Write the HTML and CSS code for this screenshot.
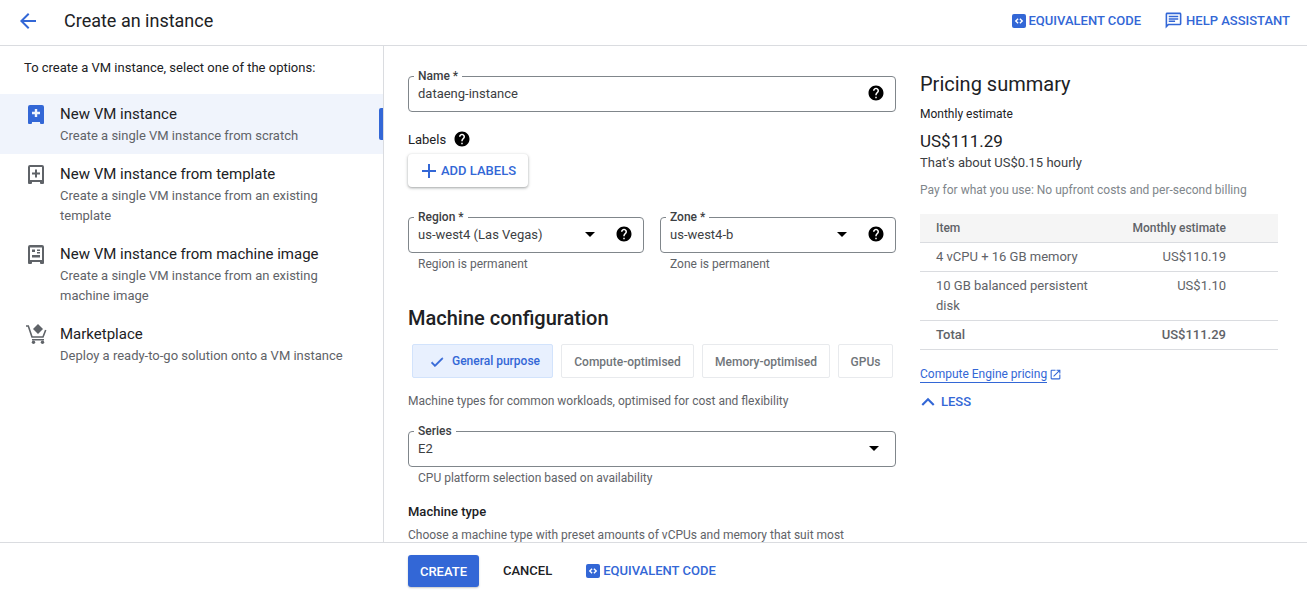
FILE: index.html
```html
<!DOCTYPE html>
<html lang="en">
<head>
<meta charset="utf-8">
<title>Create an instance</title>
<link rel="stylesheet" href="styles.css">
</head>
<body>
<svg class="defs" width="0" height="0" aria-hidden="true">
  <symbol id="help" viewBox="0 0 24 24"><path d="M12 2C6.48 2 2 6.48 2 12s4.48 10 10 10 10-4.48 10-10S17.52 2 12 2zm1 17h-2v-2h2v2zm2.07-7.75l-.9.92C13.45 12.9 13 13.5 13 15h-2v-.5c0-1.1.45-2.1 1.17-2.83l1.24-1.26c.37-.36.59-.86.59-1.41 0-1.1-.9-2-2-2s-2 .9-2 2H8c0-2.21 1.79-4 4-4s4 1.79 4 4c0 .88-.36 1.68-.93 2.25z"/></symbol>
  <symbol id="code" viewBox="0 0 14 14"><rect width="14" height="14" rx="2" fill="#3367d6"/><path d="M5.6 4.2L2.8 7l2.8 2.800 1-1L4.800 7l1.800-1.800zM8.400 4.200l-1 1L9.200 7 7.400 8.800l1 1L11.200 7z" fill="#fff"/></symbol>
</svg>

<header class="topbar">
  <svg class="back" viewBox="0 0 24 24"><path d="M20 11H7.83l5.59-5.59L12 4l-8 8 8 8 1.41-1.41L7.83 13H20v-2z"/></svg>
  <h1 class="title">Create an instance</h1>
  <div class="top-actions">
    <a class="action"><svg class="code-icon"><use href="#code"/></svg>EQUIVALENT CODE</a>
    <a class="action action-help"><svg class="chat-icon" viewBox="0 0 24 24"><path d="M20 2H4c-1.1 0-2 .9-2 2v18l4-4h14c1.1 0 2-.9 2-2V4c0-1.1-.9-2-2-2zm0 14H5.17L4 17.17V4h16v12zM6 12h8v2H6zm0-3h12v2H6zm0-3h12v2H6z"/></svg>HELP ASSISTANT</a>
  </div>
</header>

<div class="main">
  <nav class="side">
    <p class="side-intro">To create a VM instance, select one of the options:</p>
    <div class="option option-active">
      <svg class="option-icon" viewBox="0 0 16 19"><path fill-rule="evenodd" d="M2 0h12a2 2 0 0 1 2 2v16a1 1 0 0 1-1 1h-2a1 1 0 0 1-1-1v-1H4v1a1 1 0 0 1-1 1H1a1 1 0 0 1-1-1V2a2 2 0 0 1 2-2zM6.800 4v2.800H4v2.400h2.800V12h2.400V9.200H12V6.800H9.200V4z"/></svg>
      <div class="option-title">New VM instance</div>
      <div class="option-desc">Create a single VM instance from scratch</div>
    </div>
    <div class="option">
      <svg class="option-icon" viewBox="0 0 16 19"><path fill-rule="evenodd" d="M2 0h12a2 2 0 0 1 2 2v16a1 1 0 0 1-1 1h-2a1 1 0 0 1-1-1v-1H4v1a1 1 0 0 1-1 1H1a1 1 0 0 1-1-1V2a2 2 0 0 1 2-2zM2 2v13h12V2zM7 4.500V7.500H4v2h3v3h2v-3h3v-2H9v-3z"/></svg>
      <div class="option-title">New VM instance from template</div>
      <div class="option-desc">Create a single VM instance from an existing template</div>
    </div>
    <div class="option">
      <svg class="option-icon" viewBox="0 0 16 19"><path fill-rule="evenodd" d="M2 0h12a2 2 0 0 1 2 2v16a1 1 0 0 1-1 1h-2a1 1 0 0 1-1-1v-1H4v1a1 1 0 0 1-1 1H1a1 1 0 0 1-1-1V2a2 2 0 0 1 2-2zM2 2.500V15h12V2.500zM4 4.500h3V7H4zM9 4.500h3V6H9zM9 7h3v1.500H9zM4 10h8v2.500H4z"/></svg>
      <div class="option-title">New VM instance from machine image</div>
      <div class="option-desc">Create a single VM instance from an existing machine image</div>
    </div>
    <div class="option">
      <svg class="option-icon option-cart" viewBox="0 0 22 20"><path d="M13 0l5 5-5 5-5-5z"/><path d="M1 2h2.300l3.700 11h11l2.700-7" fill="none" stroke-width="1.600" stroke="#5f6368"/><path d="M7 15h12v1.500H7z"/><circle cx="8.500" cy="18.300" r="1.700"/><circle cx="17.500" cy="18.300" r="1.700"/></svg>
      <div class="option-title">Marketplace</div>
      <div class="option-desc">Deploy a ready-to-go solution onto a VM instance</div>
    </div>
  </nav>

  <div class="content">
    <form class="form">
      <div class="field">
        <span class="field-label">Name *</span>
        <span class="field-value">dataeng-instance</span>
        <svg class="help-icon"><use href="#help"/></svg>
      </div>

      <div class="labels-row"><span>Labels</span><svg class="help-icon"><use href="#help"/></svg></div>
      <button type="button" class="add-labels"><svg class="plus" viewBox="0 0 24 24"><path d="M19 13h-6v6h-2v-6H5v-2h6V5h2v6h6v2z"/></svg>ADD LABELS</button>

      <div class="two-col">
        <div>
          <div class="field">
            <span class="field-label">Region *</span>
            <span class="field-value">us-west4 (Las Vegas)</span>
            <i class="caret caret-gap"></i>
            <svg class="help-icon"><use href="#help"/></svg>
          </div>
          <div class="hint">Region is permanent</div>
        </div>
        <div>
          <div class="field">
            <span class="field-label">Zone *</span>
            <span class="field-value">us-west4-b</span>
            <i class="caret caret-gap"></i>
            <svg class="help-icon"><use href="#help"/></svg>
          </div>
          <div class="hint">Zone is permanent</div>
        </div>
      </div>

      <h2 class="section-title">Machine configuration</h2>
      <div class="tabs">
        <div class="tab tab-active"><svg class="check" viewBox="0 0 24 24"><path d="M9 16.170L4.830 12l-1.420 1.410L9 19 21 7l-1.410-1.410z"/></svg>General purpose</div>
        <div class="tab tab-compute">Compute-optimised</div>
        <div class="tab tab-memory">Memory-optimised</div>
        <div class="tab tab-gpu">GPUs</div>
      </div>
      <p class="tab-desc">Machine types for common workloads, optimised for cost and flexibility</p>

      <div class="field field-series">
        <span class="field-label">Series</span>
        <span class="field-value">E2</span>
        <i class="caret"></i>
      </div>
      <div class="hint">CPU platform selection based on availability</div>

      <h3 class="sub-title">Machine type</h3>
      <p class="tab-desc type-desc">Choose a machine type with preset amounts of vCPUs and memory that suit most</p>
    </form>

    <aside class="pricing">
      <h2 class="pricing-title">Pricing summary</h2>
      <div class="pricing-label">Monthly estimate</div>
      <div class="pricing-amount">US$111.29</div>
      <div class="pricing-hourly">That's about US$0.15 hourly</div>
      <div class="pricing-note">Pay for what you use: No upfront costs and per-second billing</div>
      <table class="price-table">
        <thead><tr><th>Item</th><th class="num">Monthly estimate</th></tr></thead>
        <tbody>
          <tr><td>4 vCPU + 16 GB memory</td><td class="num">US$110.19</td></tr>
          <tr><td>10 GB balanced persistent disk</td><td class="num">US$1.10</td></tr>
          <tr class="total"><td>Total</td><td class="num">US$111.29</td></tr>
        </tbody>
      </table>
      <div class="pricing-link-row"><a class="pricing-link">Compute Engine pricing</a><svg class="open-icon" viewBox="0 0 24 24"><path d="M19 19H5V5h7V3H5a2 2 0 0 0-2 2v14a2 2 0 0 0 2 2h14c1.100 0 2-.9 2-2v-7h-2v7zM14 3v2h3.590l-9.830 9.830 1.410 1.410L19 6.410V10h2V3h-7z"/></svg></div>
      <div class="less"><svg class="chev" viewBox="0 0 24 24"><path d="M12 8l-6 6 1.410 1.410L12 10.830l4.590 4.580L18 14z"/></svg>LESS</div>
    </aside>
  </div>
</div>

<footer class="footer">
  <button type="button" class="create">CREATE</button>
  <span class="cancel">CANCEL</span>
  <a class="action"><svg class="code-icon"><use href="#code"/></svg>EQUIVALENT CODE</a>
</footer>
</body>
</html>
```

FILE: styles.css
```css
* { box-sizing: border-box; }
html, body { height: 100%; }
body {
  margin: 0;
  height: 100vh;
  overflow: hidden;
  display: flex;
  flex-direction: column;
  font-family: Roboto, "Liberation Sans", sans-serif;
  font-size: 13px;
  color: #202124;
  background: #fff;
}
.defs { position: absolute; }
h1, h2, h3, p { margin: 0; }

/* Top bar */
.topbar {
  flex: 0 0 46px;
  display: flex;
  align-items: center;
  padding: 0 17px 4px 16px;
  border-bottom: 1px solid #dadce0;
}
.back { width: 24px; height: 24px; fill: #3367d6; margin-right: 24px; flex: none; }
.title { font-size: 18px; font-weight: 400; color: #202124; }
.top-actions { margin-left: auto; display: flex; align-items: center; gap: 23px; }
.action {
  display: inline-flex;
  align-items: center;
  color: #3367d6;
  font-size: 13px;
  font-weight: 500;
  line-height: 16px;
  white-space: nowrap;
}
.code-icon { width: 14px; height: 14px; margin-right: 3px; flex: none; }
.chat-icon { width: 19px; height: 19px; fill: #3367d6; margin-right: 3px; flex: none; }

/* Main */
.main { flex: 1; min-height: 0; display: flex; }
.side { flex: 0 0 384px; border-right: 1px solid #dadce0; }
.side-intro { padding: 14px 0 0 24px; height: 48px; line-height: 16px; font-size: 13px; color: #202124; }
.option { position: relative; padding: 10px 40px 8px 60px; }
.option-active { background: #f0f4fc; }
.option-active::after {
  content: "";
  position: absolute;
  right: 0;
  top: 14px;
  width: 4px;
  height: 32px;
  border-radius: 2px 0 0 2px;
  background: #3367d6;
}
.option-icon { position: absolute; left: 28px; top: 11px; width: 16px; height: 19px; fill: #5f6368; }
.option-active .option-icon { fill: #3367d6; }
.option-cart { left: 25px; top: 10px; width: 22px; height: 20px; }
.option-title { font-size: 15px; line-height: 20px; margin-bottom: 2px; color: #202124; }
.option-desc { font-size: 13px; line-height: 20px; color: #5f6368; }

.content { flex: 1; min-width: 0; overflow: hidden; display: flex; padding-left: 24px; }
.form { flex: 0 0 488px; padding-top: 30px; }

/* Fields */
.field {
  position: relative;
  display: flex;
  align-items: center;
  height: 36px;
  padding: 0 10px 2px 9px;
  border: 1px solid #80868b;
  border-radius: 4px;
}
.field-label {
  position: absolute;
  left: 5px;
  top: -8px;
  padding: 0 4px;
  background: #fff;
  font-size: 12px;
  font-weight: 500;
  line-height: 14px;
  color: #3c4043;
}
.field-value { flex: 1; font-size: 13px; color: #3c4043; }
.help-icon { width: 18px; height: 18px; fill: #000; flex: none; }
.caret {
  width: 0;
  height: 0;
  border-left: 5px solid transparent;
  border-right: 5px solid transparent;
  border-top: 5px solid #000;
  flex: none;
  margin-right: 6px;
}
.caret-gap { margin-right: 20px; }
.labels-row {
  display: flex;
  align-items: center;
  gap: 7px;
  margin-top: 17px;
  height: 20px;
  font-size: 13px;
  color: #202124;
}
.add-labels {
  display: flex;
  align-items: center;
  height: 33px;
  width: 120px;
  margin-top: 5px;
  padding: 0 0 0 9px;
  border: 0;
  border-radius: 4px;
  background: #fff;
  box-shadow: 0 1px 2px rgba(60,64,67,.3), 0 1px 3px 1px rgba(60,64,67,.15);
  color: #3367d6;
  font-family: inherit;
  font-size: 13px;
  font-weight: 500;
}
.plus { width: 24px; height: 24px; fill: #3367d6; }
.two-col { display: grid; grid-template-columns: 236px 236px; gap: 16px; margin-top: 30px; }
.hint { padding: 3px 0 0 10px; font-size: 12px; line-height: 16px; color: #5f6368; }
.section-title { margin-top: 33px; font-size: 20px; line-height: 26px; font-weight: 500; color: #202124; }

/* Tabs */
.tabs { display: flex; gap: 8px; margin: 13px 0 0 4px; }
.tab {
  display: flex;
  align-items: center;
  justify-content: center;
  height: 34px;
  padding-top: 1px;
  border: 1px solid #e8eaed;
  border-radius: 2px;
  font-size: 12px;
  font-weight: 500;
  color: #70757a;
}
.tab-active { width: 141px; background: #e8f0fe; border-color: #d2e3fc; color: #3367d6; padding: 0 0 1px 4px; }
.tab-compute { width: 133px; }
.tab-memory { width: 128px; }
.tab-gpu { width: 55px; }
.check { width: 16px; height: 16px; fill: #3367d6; stroke: #3367d6; stroke-width: 1; margin-right: 7px; position: relative; top: 1px; }
.tab-desc { margin-top: 15px; font-size: 12px; line-height: 16px; color: #5f6368; }
.field-series { margin-top: 22px; }
.sub-title { margin-top: 18px; font-size: 13px; line-height: 16px; font-weight: 500; color: #202124; }
.type-desc { margin-top: 7px; }

/* Pricing */
.pricing { flex: 0 0 358px; margin-left: 24px; padding-top: 25px; }
.pricing-title { font-size: 20px; line-height: 26px; font-weight: 400; color: #202124; }
.pricing-label { margin-top: 9px; font-size: 12px; line-height: 16px; color: #202124; }
.pricing-amount { margin-top: 8px; font-size: 17px; line-height: 22px; color: #202124; }
.pricing-hourly { margin-top: 2px; font-size: 13px; line-height: 18px; color: #3c4043; }
.pricing-note { margin-top: 10px; font-size: 12px; line-height: 16px; color: #80868b; }
.price-table { width: 358px; margin-top: 16px; border-collapse: collapse; font-size: 13px; color: #5f6368; table-layout: fixed; }
.price-table th { background: #f5f5f5; height: 28px; padding: 0 16px; font-size: 12px; font-weight: 500; text-align: left; border-bottom: 1px solid #dadce0; }
.price-table td { padding: 4px 16px; line-height: 20px; vertical-align: top; border-bottom: 1px solid #dadce0; }
.price-table th:first-child, .price-table td:first-child { width: 190px; }
.price-table th.num, .price-table td.num { text-align: right; padding-right: 52px; padding-left: 0; }
.total td { color: #5f6368; font-weight: 500; }
.pricing-link-row { display: flex; align-items: center; margin-top: 16px; height: 18px; }
.pricing-link { color: #3367d6; font-size: 12px; line-height: 15px; border-bottom: 1px solid #3367d6; }
.open-icon { width: 13px; height: 13px; fill: #3367d6; margin-left: 2px; }
.less { display: flex; align-items: center; margin-top: 8px; height: 20px; color: #3367d6; font-size: 13px; font-weight: 500; }
.chev { width: 26px; height: 26px; fill: #3367d6; margin: 0 0 0 -5px; flex: none; }

/* Footer */
.footer {
  flex: 0 0 54px;
  display: flex;
  align-items: center;
  padding: 3px 0 0 408px;
  border-top: 1px solid #dadce0;
}
.create {
  width: 71px;
  height: 32px;
  border: 0;
  border-radius: 3px;
  background: #3367d6;
  color: #fff;
  font-family: inherit;
  font-size: 13px;
  font-weight: 500;
  box-shadow: 0 1px 2px rgba(60,64,67,.3);
}
.cancel { margin: 0 34px 2px 24px; font-size: 13px; font-weight: 500; color: #202124; }
```
